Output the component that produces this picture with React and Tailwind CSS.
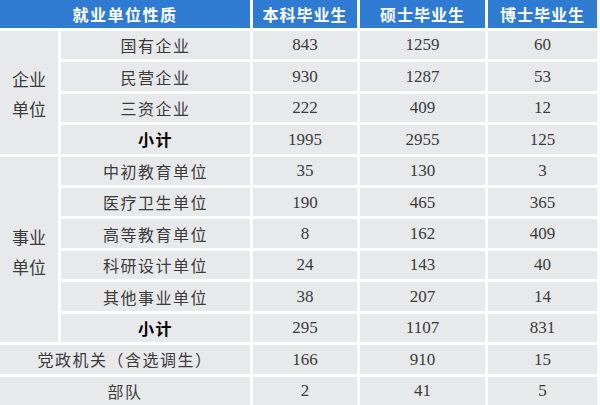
const rows = [
  { name: '国有企业', v: [843, 1259, 60] },
  { name: '民营企业', v: [930, 1287, 53] },
  { name: '三资企业', v: [222, 409, 12] },
  { name: '小计', v: [1995, 2955, 125], total: true },
  { name: '中初教育单位', v: [35, 130, 3] },
  { name: '医疗卫生单位', v: [190, 465, 365] },
  { name: '高等教育单位', v: [8, 162, 409] },
  { name: '科研设计单位', v: [24, 143, 40] },
  { name: '其他事业单位', v: [38, 207, 14] },
  { name: '小计', v: [295, 1107, 831], total: true },
  { name: '党政机关（含选调生）', v: [166, 910, 15], wide: true },
  { name: '部队', v: [2, 41, 5], wide: true },
];

const cnFont = "font-['Noto_Sans_CJK_SC','Noto_Sans',sans-serif]";
const numFont = "font-['Liberation_Serif','Times_New_Roman',serif]";

function Cell({ className = '', children, row }) {
  return (
    <div
      className={`flex items-center justify-center bg-[#e8e9eb] text-[#3b3b3b] ${className}`}
      style={row ? { gridRowStart: row } : undefined}
    >
      {children}
    </div>
  );
}

export default function App() {
  return (
    <div className="w-[600px] h-[405px] bg-white overflow-hidden">
      <div className="grid grid-cols-[58px_189px_104px_125px_109px] grid-rows-[28px_repeat(12,1fr)] gap-x-[3px] gap-y-[3px] h-[405px]">
        {/* header */}
        <div className={`col-span-2 flex items-center justify-center bg-[#2f7bd2] text-white font-bold text-[16px] tracking-[1.5px] ${cnFont}`}>
          就业单位性质
        </div>
        <div className={`flex items-center justify-center bg-[#2f7bd2] text-white font-bold text-[16px] tracking-[1px] ${cnFont}`}>本科毕业生</div>
        <div className={`flex items-center justify-center bg-[#2f7bd2] text-white font-bold text-[16px] tracking-[1px] ${cnFont}`}>硕士毕业生</div>
        <div className={`flex items-center justify-center bg-[#2f7bd2] text-white font-bold text-[16px] tracking-[1px] ${cnFont}`}>博士毕业生</div>

        {/* group labels */}
        <Cell className={`col-start-1 row-start-2 row-span-4 flex-col text-[17px] leading-[30px] pt-[4px] ${cnFont}`}>
          <span>企业</span><span>单位</span>
        </Cell>
        <Cell className={`col-start-1 row-start-6 row-span-6 flex-col text-[17px] leading-[30px] pt-[6px] ${cnFont}`}>
          <span>事业</span><span>单位</span>
        </Cell>

        {rows.map((r, i) => [
          <Cell
            key={`n${i}`}
            row={i + 2}
            className={`${r.wide ? 'col-start-1 col-span-2' : 'col-start-2'} text-[16px] tracking-[1.5px] ${cnFont} ${r.total ? 'font-bold text-black' : ''}`}
          >
            {r.name}
          </Cell>,
          ...r.v.map((v, j) => (
            <Cell key={`v${i}-${j}`} row={i + 2} className={`text-[17px] ${numFont}`}>{v}</Cell>
          )),
        ])}
      </div>
    </div>
  );
}
